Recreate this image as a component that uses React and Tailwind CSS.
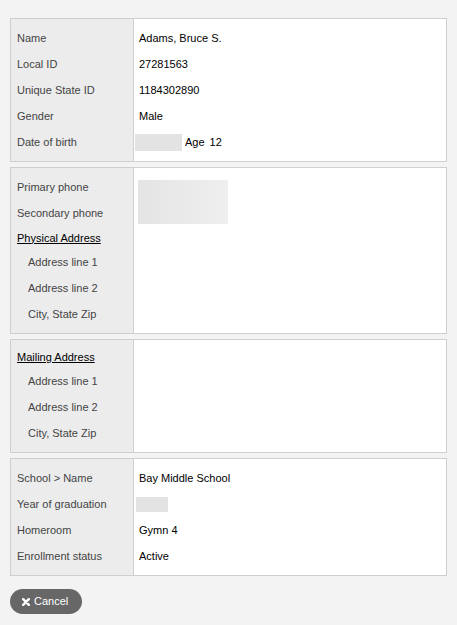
import React from "react";

const F = { fontFamily: '"Liberation Sans", Arial, sans-serif' };

function Row({ label, children, indent, heading, h = "h-[26px]" }) {
  return (
    <div className={`flex ${h}`}>
      <div
        className={`w-[123px] shrink-0 bg-[#ececec] border-r border-[#cfcfcf] flex items-center pt-[1px] ${
          indent ? "pl-[17px]" : "pl-[6px]"
        } ${heading ? "text-black underline" : "text-[#444]"}`}
      >
        {label}
      </div>
      <div className="flex-1 flex items-center pt-[1px] pl-[5px] text-black">{children}</div>
    </div>
  );
}

function Spacer({ h }) {
  return (
    <div className={`flex ${h}`}>
      <div className="w-[123px] shrink-0 bg-[#ececec] border-r border-[#cfcfcf]" />
      <div className="flex-1" />
    </div>
  );
}

function Box({ children, className = "" }) {
  return (
    <div className={`border border-[#cfcfcf] bg-white ${className}`}>
      <Spacer h="h-[6px]" />
      {children}
      <Spacer h="h-[6px]" />
    </div>
  );
}

export default function App() {
  return (
    <div className="min-h-[625px] w-[457px] bg-[#f3f3f3] px-[10px] pt-[18px] text-[11px]" style={F}>
      <Box>
        <Row label="Name">Adams, Bruce S.</Row>
        <Row label="Local ID">27281563</Row>
        <Row label="Unique State ID">1184302890</Row>
        <Row label="Gender">Male</Row>
        <Row label="Date of birth">
          <div className="-ml-[4px] w-[47px] h-[17px] bg-[#e3e3e3]" />
          <span className="ml-[3px]">Age</span>
          <span className="ml-[5px]">12</span>
        </Row>
      </Box>

      <Box className="mt-[5px]">
        <div className="relative">
          <Row label="Primary phone" />
          <Row label="Secondary phone" />
          <Row label="Physical Address" heading h="h-[23px]" />
          <Row label="Address line 1" indent />
          <Row label="Address line 2" indent />
          <Row label="City, State Zip" indent />
          <div className="absolute left-[127px] top-[6px] w-[90px] h-[44px] bg-gradient-to-r from-[#e4e4e4] to-[#efefef]" />
        </div>
      </Box>

      <Box className="mt-[5px]">
        <Row label="Mailing Address" heading h="h-[22px]" />
        <Row label="Address line 1" indent />
        <Row label="Address line 2" indent />
        <Row label="City, State Zip" indent />
      </Box>

      <Box className="mt-[5px]">
        <Row label="School > Name">Bay Middle School</Row>
        <Row label="Year of graduation">
          <div className="-ml-[3px] w-[32px] h-[15px] bg-[#e3e3e3]" />
        </Row>
        <Row label="Homeroom">Gymn 4</Row>
        <Row label="Enrollment status">Active</Row>
      </Box>

      <button className="mt-[13px] flex items-center h-[25px] w-[72px] rounded-full bg-[#676767] text-white font-medium text-[11px] pl-[12px]" style={F}>
        <svg width="8" height="8" viewBox="0 0 10 10" className="mr-[4px]">
          <path d="M1.5 1.5 L8.5 8.5 M8.5 1.5 L1.5 8.5" stroke="white" strokeWidth="3" strokeLinecap="round" />
        </svg>
        Cancel
      </button>
    </div>
  );
}
